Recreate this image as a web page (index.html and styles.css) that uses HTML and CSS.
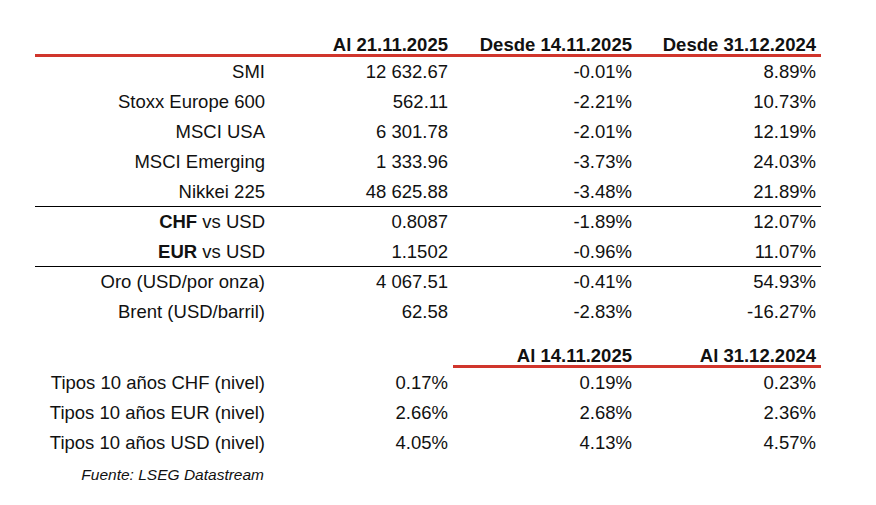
FILE: index.html
```html
<!DOCTYPE html>
<html lang="es">
<head>
<meta charset="utf-8">
<title>Mercados</title>
<link rel="stylesheet" href="styles.css">
</head>
<body>
<div class="page">
  <div class="row head">
    <div class="cell"></div>
    <div class="cell b">Al 21.11.2025</div>
    <div class="cell b">Desde 14.11.2025</div>
    <div class="cell b">Desde 31.12.2024</div>
  </div>
  <div class="row"><div class="cell">SMI</div><div class="cell">12 632.67</div><div class="cell">-0.01%</div><div class="cell">8.89%</div></div>
  <div class="row"><div class="cell">Stoxx Europe 600</div><div class="cell">562.11</div><div class="cell">-2.21%</div><div class="cell">10.73%</div></div>
  <div class="row"><div class="cell">MSCI USA</div><div class="cell">6 301.78</div><div class="cell">-2.01%</div><div class="cell">12.19%</div></div>
  <div class="row"><div class="cell">MSCI Emerging</div><div class="cell">1 333.96</div><div class="cell">-3.73%</div><div class="cell">24.03%</div></div>
  <div class="row sep"><div class="cell">Nikkei 225</div><div class="cell">48 625.88</div><div class="cell">-3.48%</div><div class="cell">21.89%</div></div>
  <div class="row"><div class="cell"><b>CHF</b> vs USD</div><div class="cell">0.8087</div><div class="cell">-1.89%</div><div class="cell">12.07%</div></div>
  <div class="row sep"><div class="cell"><b>EUR</b> vs USD</div><div class="cell">1.1502</div><div class="cell">-0.96%</div><div class="cell">11.07%</div></div>
  <div class="row"><div class="cell">Oro (USD/por onza)</div><div class="cell">4 067.51</div><div class="cell">-0.41%</div><div class="cell">54.93%</div></div>
  <div class="row"><div class="cell">Brent (USD/barril)</div><div class="cell">62.58</div><div class="cell">-2.83%</div><div class="cell">-16.27%</div></div>

  <div class="row head2">
    <div class="cell"></div>
    <div class="cell"></div>
    <div class="cell b red">Al 14.11.2025</div>
    <div class="cell b red">Al 31.12.2024</div>
  </div>
  <div class="row"><div class="cell">Tipos 10 años CHF (nivel)</div><div class="cell">0.17%</div><div class="cell">0.19%</div><div class="cell">0.23%</div></div>
  <div class="row"><div class="cell">Tipos 10 años EUR (nivel)</div><div class="cell">2.66%</div><div class="cell">2.68%</div><div class="cell">2.36%</div></div>
  <div class="row"><div class="cell">Tipos 10 años USD (nivel)</div><div class="cell">4.05%</div><div class="cell">4.13%</div><div class="cell">4.57%</div></div>
  <div class="source">Fuente: LSEG Datastream</div>
</div>
</body>
</html>
```
FILE: styles.css
```css
html, body {
  margin: 0;
  padding: 0;
  background: #ffffff;
}
.page {
  padding: 35px 0 0 35px;
  width: 786px;
  font-family: "Liberation Sans", Arial, sans-serif;
  font-size: 18.5px;
  color: #111111;
}
.row {
  display: grid;
  grid-template-columns: 235px 183px 184px 184px;
  height: 30px;
  line-height: 30px;
  box-sizing: border-box;
}
.cell {
  text-align: right;
  padding-right: 5px;
  white-space: nowrap;
}
.b {
  font-weight: bold;
}
b {
  font-weight: bold;
}
.head {
  height: 22px;
  line-height: 19px;
  border-bottom: 3px solid #d0352c;
}
.sep {
  border-bottom: 1px solid #000000;
}
.head2 {
  margin-top: 19px;
  height: 22px;
  line-height: 19px;
}
.head2 .red {
  border-bottom: 3px solid #d0352c;
}
.source {
  width: 229px;
  text-align: right;
  font-style: italic;
  font-size: 15.5px;
  line-height: 22px;
  margin-top: 6px;
}
```
